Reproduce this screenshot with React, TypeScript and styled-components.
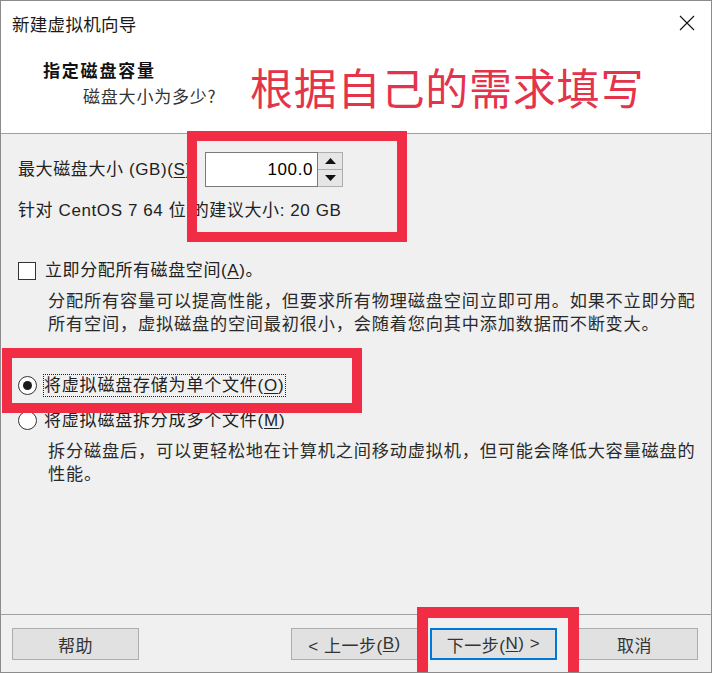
import React from 'react';
import styled, { createGlobalStyle } from 'styled-components';

const GlobalStyle = createGlobalStyle`
  html, body {
    margin: 0;
    padding: 0;
    background: #ffffff;
  }
  body {
    font-family: 'Liberation Sans', 'Noto Sans CJK SC', sans-serif;
    color: #1e1e1e;
  }
`;

const RED = '#f02d45';

/* window frame */
const Window = styled.div`
  position: relative;
  width: 710px;
  height: 671px;
  border: 1px solid #8c8c8c;
  display: flex;
  flex-direction: column;
  background: #f0f0f0;
  overflow: hidden;
`;

const TitleBar = styled.div`
  height: 44px;
  background: #ffffff;
  display: flex;
  align-items: center;
  justify-content: space-between;
  padding: 0 14px 0 11px;
`;

const TitleText = styled.span`
  font-family: 'Noto Sans CJK SC', sans-serif;
  font-size: 17.5px;
  color: #1a1a1a;
  letter-spacing: 0.3px;
`;

const CloseButton = styled.span`
  display: flex;
  width: 16px;
  height: 16px;
  margin-right: 2px;
`;

const Header = styled.div`
  height: 89px;
  background: #ffffff;
  border-bottom: 1px solid #a0a0a0;
  padding: 13px 0 0 42px;
  box-sizing: border-box;
`;

const Heading = styled.div`
  font-family: 'Noto Sans CJK SC', sans-serif;
  font-weight: 700;
  font-size: 17px;
  line-height: 24px;
  letter-spacing: 1.8px;
  color: #111;
`;

const SubHeading = styled.div`
  margin: 2px 0 0 40px;
  font-family: 'Noto Sans CJK SC', sans-serif;
  font-size: 17px;
  line-height: 24px;
  letter-spacing: 0.8px;
  color: #333;
`;

/* body */
const Body = styled.div`
  flex: 1;
  padding: 18px 0 0 17px;
  display: flex;
  flex-direction: column;
  font-size: 17px;
  color: #222;
`;

const Row = styled.div<{ $mt?: number }>`
  display: flex;
  align-items: center;
  margin-top: ${(p) => p.$mt ?? 0}px;
  line-height: 23px;
  letter-spacing: 0.6px;
`;

const Desc = styled.div<{ $mt?: number }>`
  margin: ${(p) => p.$mt ?? 0}px 0 0 30px;
  line-height: 23px;
  font-size: 17.2px;
  letter-spacing: 0.8px;
  color: #2a2a2a;
`;

const U = styled.span`
  text-decoration: underline;
  text-underline-offset: 2px;
`;

const SpinBox = styled.div`
  display: flex;
  margin-left: 8px;
  height: 35px;
`;

const SpinInput = styled.div`
  width: 113px;
  box-sizing: border-box;
  border: 1px solid #7a7a7a;
  background: #ffffff;
  display: flex;
  align-items: center;
  justify-content: flex-end;
  padding-right: 4px;
  font-size: 17px;
  color: #000;
`;

const SpinButtons = styled.div`
  width: 25px;
  display: flex;
  flex-direction: column;
  border: 1px solid #adadad;
  border-left: none;
  box-sizing: border-box;
`;

const SpinHalf = styled.div<{ $top?: boolean }>`
  flex: 1;
  background: #e6e6e6;
  border-bottom: ${(p) => (p.$top ? '1px solid #adadad' : 'none')};
  display: flex;
  align-items: center;
  justify-content: center;
`;

const CheckBox = styled.span`
  width: 18px;
  height: 18px;
  box-sizing: border-box;
  border: 1px solid #333;
  background: #fff;
  margin-right: 9px;
  flex-shrink: 0;
`;

const Radio = styled.span<{ $checked?: boolean }>`
  width: 19px;
  height: 19px;
  box-sizing: border-box;
  border: 1px solid #333;
  border-radius: 50%;
  background: #fff;
  margin-right: 6px;
  display: flex;
  align-items: center;
  justify-content: center;
  flex-shrink: 0;
  &::after {
    content: '';
    display: ${(p) => (p.$checked ? 'block' : 'none')};
    width: 9px;
    height: 9px;
    border-radius: 50%;
    background: #1a1a1a;
  }
`;

const RadioLabel = styled.span<{ $focused?: boolean }>`
  outline: ${(p) => (p.$focused ? '1px dotted #222' : 'none')};
  outline-offset: -1px;
  padding: 0 1px;
  letter-spacing: 0.8px;
`;

/* footer */
const Footer = styled.div`
  height: 58px;
  border-top: 1px solid #a0a0a0;
  display: flex;
  align-items: flex-start;
  padding: 13px 0 0 11px;
  box-sizing: border-box;
`;

const Button = styled.div<{ $default?: boolean; $ml?: number }>`
  width: 127px;
  height: 32px;
  box-sizing: border-box;
  margin-left: ${(p) => p.$ml ?? 0}px;
  background: #e1e1e1;
  border: ${(p) => (p.$default ? '2px solid #0078d7' : '1px solid #adadad')};
  display: flex;
  align-items: center;
  justify-content: center;
  font-size: 17px;
  color: #333;
  letter-spacing: 0.5px;
`;

/* annotations drawn over the screenshot */
const Callout = styled.div<{ $x: number; $y: number; $w: number; $h: number; $b?: number }>`
  position: absolute;
  left: ${(p) => p.$x}px;
  top: ${(p) => p.$y}px;
  width: ${(p) => p.$w}px;
  height: ${(p) => p.$h}px;
  box-sizing: border-box;
  border: ${(p) => p.$b ?? 10}px solid ${RED};
  pointer-events: none;
`;

const CalloutText = styled.div`
  position: absolute;
  left: 249px;
  top: 56px;
  font-family: 'Noto Sans CJK SC', sans-serif;
  font-size: 43px;
  line-height: 58px;
  color: #e3344c;
  letter-spacing: 0.8px;
  white-space: nowrap;
`;

const Arrow = ({ up }: { up?: boolean }) => (
  <svg width="11" height="6" viewBox="0 0 11 6">
    <path d={up ? 'M0 6 L5.5 0 L11 6 Z' : 'M0 0 L5.5 6 L11 0 Z'} fill="#111" />
  </svg>
);

export default function App() {
  return (
    <>
      <GlobalStyle />
      <Window>
        <TitleBar>
          <TitleText>新建虚拟机向导</TitleText>
          <CloseButton>
            <svg width="16" height="16" viewBox="0 0 16 16">
              <path d="M1 1 L15 15 M15 1 L1 15" stroke="#111" strokeWidth="1.1" />
            </svg>
          </CloseButton>
        </TitleBar>
        <Header>
          <Heading>指定磁盘容量</Heading>
          <SubHeading>磁盘大小为多少?</SubHeading>
        </Header>

        <Body>
          <Row>
            <span>
              最大磁盘大小 (GB)(<U>S</U>):
            </span>
            <SpinBox>
              <SpinInput>100.0</SpinInput>
              <SpinButtons>
                <SpinHalf $top>
                  <Arrow up />
                </SpinHalf>
                <SpinHalf>
                  <Arrow />
                </SpinHalf>
              </SpinButtons>
            </SpinBox>
          </Row>
          <Row $mt={12}>针对 CentOS 7 64 位 的建议大小: 20 GB</Row>

          <Row $mt={37}>
            <CheckBox />
            <span>
              立即分配所有磁盘空间(<U>A</U>)。
            </span>
          </Row>
          <Desc $mt={8}>
            分配所有容量可以提高性能，但要求所有物理磁盘空间立即可用。如果不立即分配
            <br />
            所有空间，虚拟磁盘的空间最初很小，会随着您向其中添加数据而不断变大。
          </Desc>

          <Row $mt={38}>
            <Radio $checked />
            <RadioLabel $focused>
              将虚拟磁盘存储为单个文件(<U>O</U>)
            </RadioLabel>
          </Row>
          <Row $mt={12}>
            <Radio />
            <RadioLabel>
              将虚拟磁盘拆分成多个文件(<U>M</U>)
            </RadioLabel>
          </Row>
          <Desc $mt={8}>
            拆分磁盘后，可以更轻松地在计算机之间移动虚拟机，但可能会降低大容量磁盘的
            <br />
            性能。
          </Desc>
        </Body>

        <Footer>
          <Button>帮助</Button>
          <Button $ml={152}>
            &lt; 上一步(<U>B</U>)
          </Button>
          <Button $ml={12} $default>
            下一步(<U>N</U>) &gt;
          </Button>
          <Button $ml={14}>取消</Button>
        </Footer>

        <CalloutText>根据自己的需求填写</CalloutText>
        <Callout $x={186} $y={130} $w={220} $h={111} />
        <Callout $x={1} $y={347} $w={360} $h={65} />
        <Callout $x={416} $y={606} $w={162} $h={80} $b={11} />
      </Window>
    </>
  );
}
